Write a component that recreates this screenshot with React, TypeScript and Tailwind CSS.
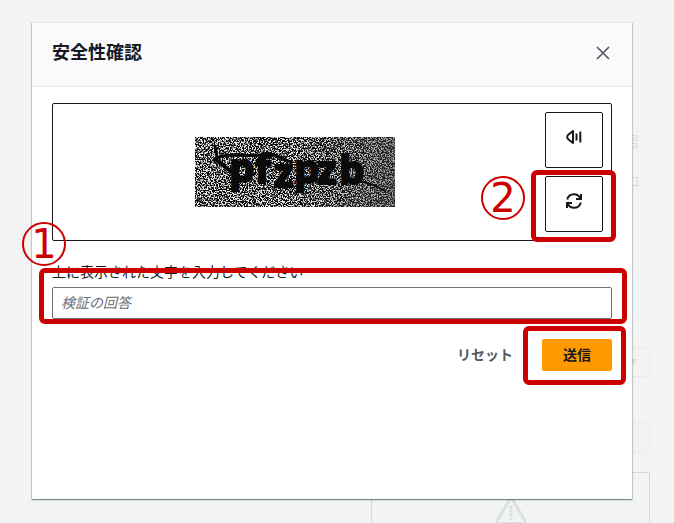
import { useId } from 'react'
import type { ReactNode } from 'react'

function CloseIcon() {
  return (
    <svg width="18" height="18" viewBox="0 0 18 18" fill="none" stroke="currentColor" strokeWidth="1.7" aria-hidden="true">
      <path d="M3 3l12 12M15 3L3 15" />
    </svg>
  )
}

function AudioIcon() {
  return (
    <svg width="16" height="16" viewBox="0 0 16 16" fill="none" stroke="currentColor" strokeWidth="2" strokeLinejoin="round" aria-hidden="true">
      <path d="M7 2L2.500 5.500Q1.200 6.500 1.200 8t1.300 2.500L7 14z" />
      <path d="M10.500 4.500v7" />
      <path d="M14.300 2.500v11" />
    </svg>
  )
}

function RefreshIcon() {
  return (
    <svg width="16" height="16" viewBox="0 0 16 16" fill="none" stroke="currentColor" strokeWidth="2" aria-hidden="true">
      <path d="M15 1v5h-5" />
      <path d="M1 15v-5h5" />
      <path d="M1.200 6.500C2 3 4.700 1.200 8 1.200c3 0 5.300 1.600 6.600 4.600" />
      <path d="M14.800 9.500C14 13 11.300 14.800 8 14.800c-3 0-5.300-1.600-6.600-4.600" />
    </svg>
  )
}

function WarningIcon() {
  return (
    <svg width="32" height="32" viewBox="0 0 32 32" fill="none" stroke="currentColor" strokeWidth="3" strokeLinejoin="round" aria-hidden="true">
      <path d="M16 2L2 26Q1.500 28.500 4 28.500h24Q30.500 28.500 30 26z" />
      <path d="M16 11v10M16 22.500v3.500" strokeDasharray="3 0.7" />
    </svg>
  )
}

function CaptchaImage() {
  const id = useId()
  return (
    <svg width="200" height="70" viewBox="0 0 200 70" role="img" aria-label="CAPTCHA">
      <defs>
        <filter id={`${id}-noise`} x="0" y="0" width="100%" height="100%" colorInterpolationFilters="sRGB">
          <feTurbulence type="fractalNoise" baseFrequency="0.73" numOctaves="3" seed="7" />
          <feColorMatrix values="7 0 0 0 -3.2  7 0 0 0 -3.2  7 0 0 0 -3.2  0 0 0 0 1" />
        </filter>
        <linearGradient id={`${id}-shade`}>
          <stop offset="0.5" stopColor="#444" stopOpacity="0.1" />
          <stop offset="1" stopColor="#444" stopOpacity="0.55" />
        </linearGradient>
      </defs>
      <rect width="200" height="70" filter={`url(#${id}-noise)`} />
      <rect width="200" height="70" fill={`url(#${id}-shade)`} />
      <g stroke="#0a0a0a" fill="none" strokeLinecap="round" strokeLinejoin="round">
        <path d="M20 9l2 12" strokeWidth="3" />
        <path d="M20 22C32 15 50 20 66 18S85 21 96 25" strokeWidth="3" />
        <path d="M20 22l18 14" strokeWidth="4" />
        <path d="M162 44C172 45 182 49 190 54" strokeWidth="2" />
      </g>
      <text
        x="34 60 79 99 122 144"
        y="45 46 50 46 47 47"
        fill="#0a0a0a"
        stroke="#0a0a0a"
        strokeWidth="2"
        className="font-['Open_Sans',sans-serif] text-[40px] font-bold"
      >
        pfzpzb
      </text>
    </svg>
  )
}

function Marker({ className, children }: { className: string; children: ReactNode }) {
  return (
    <span
      className={`pointer-events-none absolute flex size-11 items-center justify-center rounded-full border-2 border-[#cc0000] font-['DejaVu_Sans',sans-serif] text-[40px] leading-none text-[#cc0000] ${className}`}
    >
      {children}
    </span>
  )
}

function Frame({ className }: { className: string }) {
  return <span className={`pointer-events-none absolute rounded-md border-5 border-[#cc0000] ${className}`} />
}

// Dimmed sign-up form behind the dialog
function Backdrop() {
  return (
    <div className="absolute inset-0 overflow-hidden pt-[130px] pr-6 pl-[371px] text-[#dcdfdf]" aria-hidden="true">
      <div className="pr-2.5 text-right text-sm leading-5">号</div>
      <div className="mt-5 pr-2.5 text-right text-sm leading-5">ロ</div>
      <div className="mt-[157px] flex h-[30px] items-center justify-end rounded-sm border border-[#e9ebed] pr-3">
        <svg width="8" height="6" viewBox="0 0 8 6" fill="currentColor">
          <path d="M0 0h8L4 6z" />
        </svg>
      </div>
      <div className="mt-[45px] h-[30px] rounded-sm border border-[#e9ebed] bg-[#f1f2f4]" />
      <div className="mt-5 flex h-40 justify-center border border-[#d5d9d9] pt-[22px]">
        <WarningIcon />
      </div>
    </div>
  )
}

export default function App() {
  return (
    <main className="relative min-h-screen bg-[#f2f4f4] px-8 pt-[22px] pb-6 font-['Noto_Sans_CJK_JP',sans-serif] text-sm text-[#16191f]">
      <Backdrop />

      <section
        role="dialog"
        aria-labelledby="dialog-title"
        className="relative mx-auto min-h-[477px] max-w-[600px] bg-white shadow-[0_1px_1px_0_rgba(0,28,36,0.3),1px_1px_1px_0_rgba(0,28,36,0.15),-1px_1px_1px_0_rgba(0,28,36,0.15)] min-[674px]:mr-[10px] min-[674px]:ml-0"
      >
        <header className="flex h-[65px] items-center justify-between border-y border-[#eaeded] bg-[#fafafa] px-5 pb-1">
          <h1 id="dialog-title" className="pb-1 text-lg leading-6 font-bold">安全性確認</h1>
          <button type="button" aria-label="閉じる" className="text-[#545b64]">
            <CloseIcon />
          </button>
        </header>

        <form className="px-5 pt-4" onSubmit={(e) => e.preventDefault()}>
          <div className="relative flex gap-4 rounded-xs border border-[#16191f] p-2">
            <div className="flex flex-1 items-center justify-center">
              <CaptchaImage />
            </div>
            <div className="flex flex-col gap-2">
              <button type="button" aria-label="音声" className="flex h-14 w-[58px] items-center justify-center rounded-xs border border-[#16191f] pb-1.5">
                <AudioIcon />
              </button>
              <div className="relative">
                <button type="button" aria-label="更新" className="flex h-14 w-[58px] items-center justify-center rounded-xs border border-[#16191f] pb-1.5">
                  <RefreshIcon />
                </button>
                <Frame className="-top-1.5 -right-[13px] -bottom-2.5 -left-3.5" />
                <Marker className="top-0 -left-16">2</Marker>
              </div>
            </div>
            <Marker className="-bottom-[26px] -left-[31px]">1</Marker>
          </div>

          <div className="relative mt-5">
            <label htmlFor="answer" className="block leading-5">上に表示された文字を入力してください</label>
            <input
              id="answer"
              type="text"
              placeholder="検証の回答"
              className="mt-1.5 block h-8 w-full rounded-xs border border-[#687078] bg-white px-2 pb-0.5 text-sm placeholder:text-[#687078] placeholder:italic"
            />
            <Frame className="top-[7px] -right-[15px] -bottom-[5px] -left-[13px]" />
          </div>

          <div className="mt-5 flex justify-end gap-2">
            <button type="reset" className="h-8 px-[21px] pb-0.5 font-bold text-[#545b64]">リセット</button>
            <div className="relative">
              <button type="submit" className="block h-8 rounded-xs bg-[#ff9900] px-[21px] pb-0.5 font-bold">送信</button>
              <Frame className="-top-[13px] -right-3.5 -bottom-3.5 -left-[19px]" />
            </div>
          </div>
        </form>
      </section>
    </main>
  )
}
